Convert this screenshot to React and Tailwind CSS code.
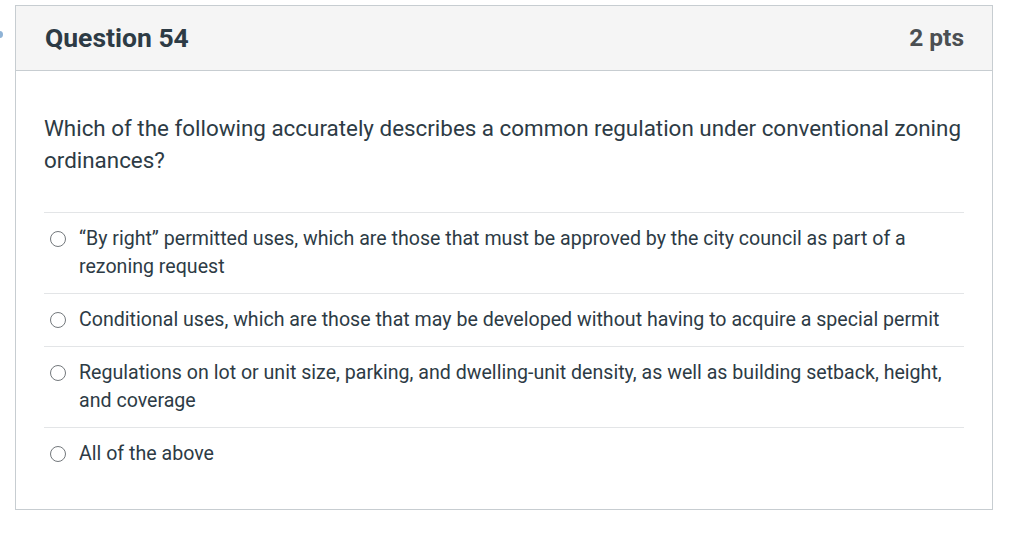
import React from "react";

const options = [
  "“By right” permitted uses, which are those that must be approved by the city council as part of a rezoning request",
  "Conditional uses, which are those that may be developed without having to acquire a special permit",
  "Regulations on lot or unit size, parking, and dwelling-unit density, as well as building setback, height, and coverage",
  "All of the above",
];

export default function App() {
  return (
    <div className="relative w-[1024px] h-[533px] bg-white overflow-hidden" style={{ fontFamily: "Roboto, 'Liberation Sans', sans-serif" }}>
      <div className="absolute left-[-4px] top-[31px] w-[7px] h-[7px] rounded-full bg-[#8fb3d6]" />
      <div className="pl-[15px] pt-[5px]">
        <div className="w-[978px] h-[505px] border border-[#c7cdd1] bg-white">
          <div className="h-[65px] bg-[#f5f5f5] border-b border-[#c7cdd1] flex items-center justify-between pl-[29px] pr-[28px]">
            <h2 className="text-[26.5px] font-bold text-[#2d3b45] leading-none">Question 54</h2>
            <div className="text-[24.5px] font-bold text-[#4b4f52] leading-none">2 pts</div>
          </div>
          <div className="pl-[28px] pr-[27px] pt-[41px]">
            <p className="text-[22.4px] leading-[32px] text-[#2d3b45] pr-[2px]">
              Which of the following accurately describes a common regulation under conventional zoning ordinances?
            </p>
            <div className="mt-[36px] mr-[1px]">
              {options.map((o, i) => (
                <div key={i} className="border-t border-[#e3e5e7] py-[12px] flex items-start">
                  <div className="w-[35px] shrink-0 flex items-center h-[28px] pl-[6px]">
                    <span className="block w-[16px] h-[16px] rounded-full border border-[#73787c] bg-white" />
                  </div>
                  <div className="text-[19.6px] leading-[28px] text-[#2d3b45] pr-[20px]">{o}</div>
                </div>
              ))}
            </div>
          </div>
        </div>
      </div>
    </div>
  );
}
